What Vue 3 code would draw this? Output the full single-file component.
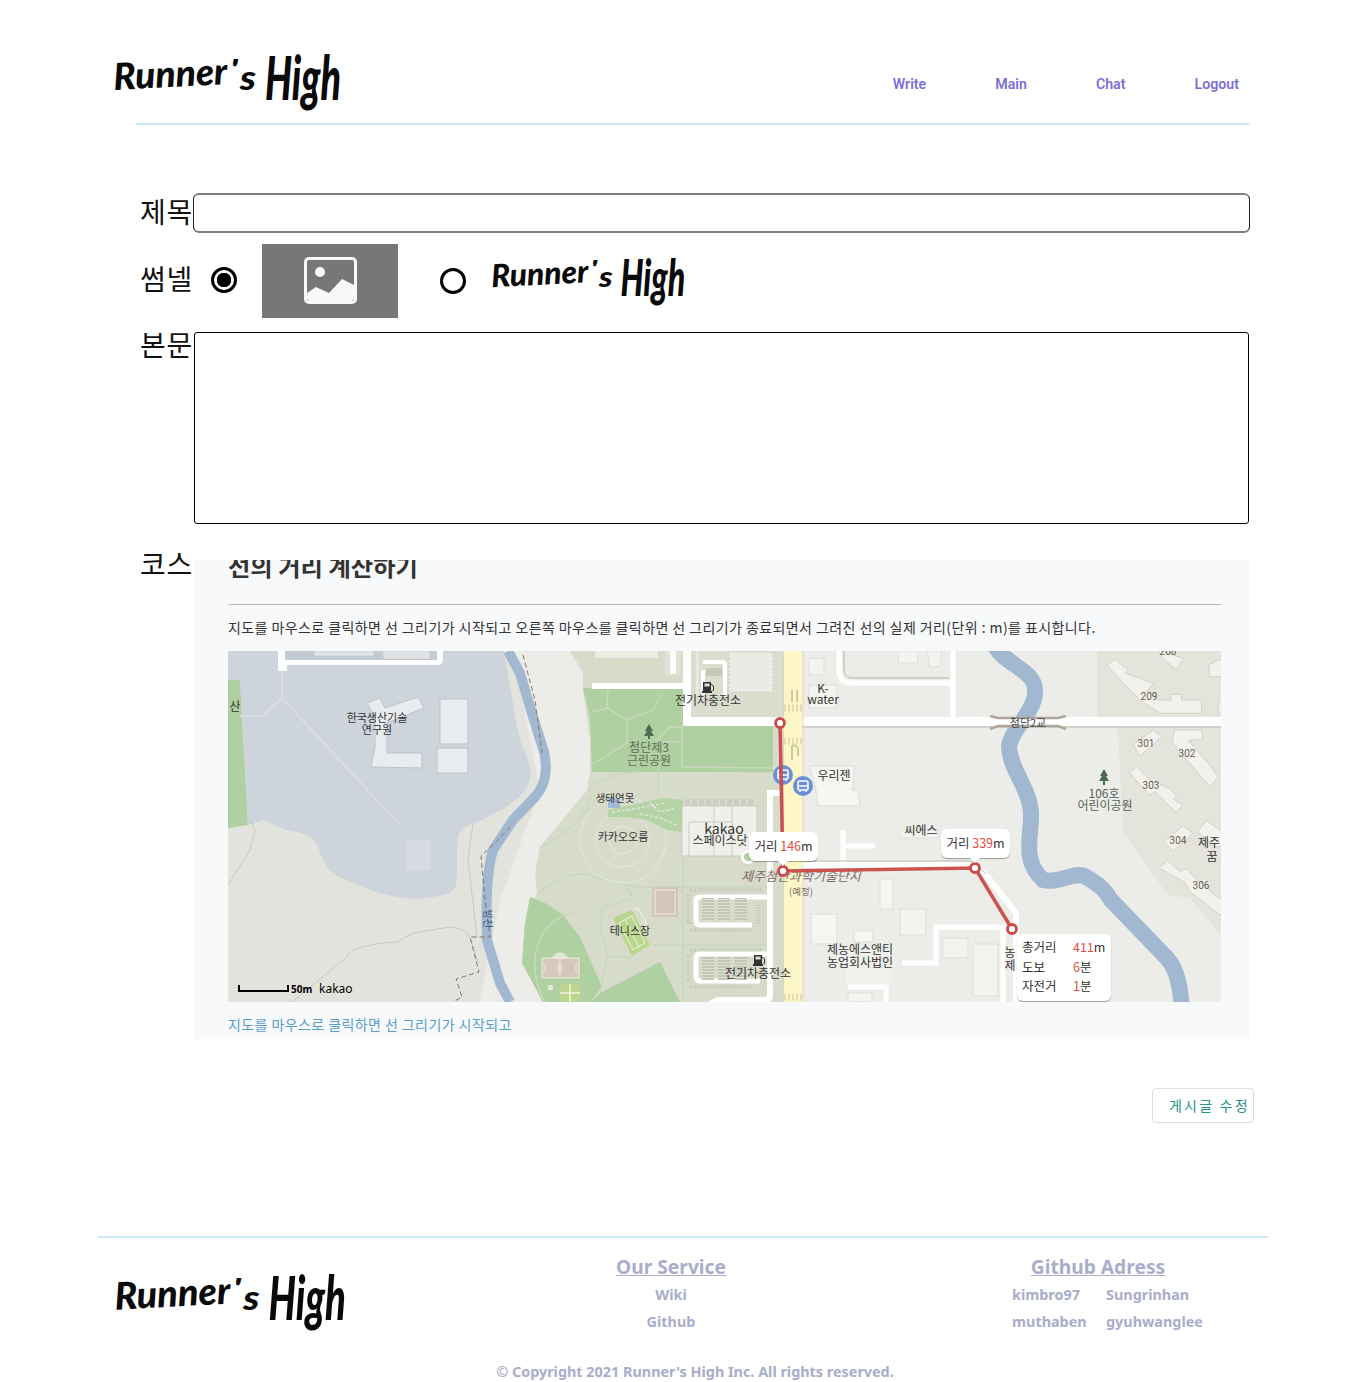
<script setup>
const navItems = ['Write', 'Main', 'Chat', 'Logout']

// map labels: page-relative coords, the svg viewBox is offset to match
const mapLabels = [
  { t: '전기차충전소', x: 708, y: 705 },
  { t: 'K-', x: 823, y: 693 },
  { t: 'water', x: 823, y: 704 },
  { t: '첨단제3', x: 649, y: 752, c: '#5c6b5a' },
  { t: '근린공원', x: 649, y: 765, c: '#5c6b5a' },
  { t: '한국생산기술', x: 377, y: 722, s: 11 },
  { t: '연구원', x: 377, y: 734, s: 11 },
  { t: '산', x: 235, y: 711 },
  { t: '우리젠', x: 834, y: 780 },
  { t: '106호', x: 1104, y: 798, c: '#55605a' },
  { t: '어린이공원', x: 1105, y: 810, c: '#55605a' },
  { t: '생태연못', x: 615, y: 802, s: 10.5 },
  { t: '카카오오름', x: 623, y: 841, s: 11 },
  { t: 'kakao', x: 724, y: 834, s: 14 },
  { t: '스페이스닷', x: 720, y: 845 },
  { t: '씨에스', x: 921, y: 835 },
  { t: '테니스장', x: 630, y: 935, s: 11 },
  { t: '제농에스앤티', x: 860, y: 954 },
  { t: '농업회사법인', x: 860, y: 967 },
  { t: '전기차충전소', x: 758, y: 978 },
  { t: '제주', x: 1209, y: 847 },
  { t: '꿈', x: 1212, y: 861 },
  { t: '농', x: 1010, y: 957 },
  { t: '제', x: 1010, y: 970 },
]
const aptNumbers = [
  { t: '208', x: 1168, y: 655 },
  { t: '209', x: 1149, y: 700 },
  { t: '301', x: 1146, y: 747 },
  { t: '302', x: 1187, y: 757 },
  { t: '303', x: 1151, y: 789 },
  { t: '304', x: 1178, y: 844 },
  { t: '306', x: 1201, y: 889 },
]
// traced from the reference crop, in 3x crop units (see transform on the group)
const apartments = [
  '50,45 75,28 115,60 105,70 150,85 190,100 170,125 205,150 243,150 243,133 275,133 275,150 335,150 335,190 210,190 150,150 115,115',
  '205,0 280,25 258,60 215,20',
  '357,45 385,30 405,30 405,80 357,80',
  '385,155 405,155 405,190 385,190',
  '130,285 190,240 215,260 150,318',
  '253,240 337,240 337,268 295,272 355,340 385,380 360,410 247,280',
  '118,368 140,350 180,392 205,400 240,418 262,440 250,448 278,465 258,487 195,425 178,435',
  '222,575 280,527 308,550 250,603',
  '322,545 350,512 405,550 405,590 375,590',
  '208,655 232,632 270,665 290,655 310,680 385,745 405,745 405,775 390,795 300,725 285,697',
]
const parkLines = [
  'M608,690 L607,708 M590,713 L607,708 L627,720 L653,710 L662,693',
  'M627,720 V743 L600,760 L590,765',
  'M657,740 L670,727 H683 M682,727 V767 M660,742 H682 M682,767 L773,768',
  'M658,767 V797',
  'M592,785 C610,775 625,772 640,772',
  'M540,892 C560,875 575,872 590,875 C610,882 625,887 650,887 H767',
  'M627,888 L633,898 L603,907 L600,927 L608,957 H630',
  'M652,945 H767',
  'M683,857 V1000',
  'M678,923 H695',
  'M572,913 C550,918 538,935 535,957 C534,975 537,990 545,1002',
  'M600,993 L607,958',
  'M540,848 C570,830 590,815 590,795',
]
const totals = [
  { k: '총거리', v: '411', u: 'm' },
  { k: '도보', v: '6', u: '분' },
  { k: '자전거', v: '1', u: '분' },
]
const githubNames = ['kimbro97', 'Sungrinhan', 'muthaben', 'gyuhwanglee']
const parkCells = [
  [702, 898], [718, 898], [735, 898],
  [702, 957], [718, 957], [735, 957],
]
</script>

<template>
  <div class="page">
    <header class="top">
      <svg class="logo logo-top" viewBox="0 0 230 64">
        <g class="logo-ink">
          <text x="2" y="40" font-size="37" textLength="114" lengthAdjust="spacingAndGlyphs" transform="rotate(-3 2 40)">Runner</text>
          <text x="118" y="28" font-size="26" textLength="8" lengthAdjust="spacingAndGlyphs">'</text>
          <text x="128" y="40" font-size="34" textLength="16" lengthAdjust="spacingAndGlyphs">s</text>
          <text x="153" y="50" font-size="60" textLength="76" lengthAdjust="spacingAndGlyphs">High</text>
        </g>
      </svg>
      <nav class="nav">
        <a v-for="item in navItems" :key="item" href="#">{{ item }}</a>
      </nav>
    </header>

    <form class="form" @submit.prevent>
      <div class="row row-title">
        <label class="lbl">제목</label>
        <input class="title-input" type="text" />
      </div>

      <div class="row row-thumb">
        <label class="lbl">썸넬</label>
        <input class="radio radio-a" type="radio" name="thumb" checked />
        <div class="thumb">
          <svg width="53" height="47" viewBox="0 0 53 47">
            <rect width="53" height="47" rx="5" fill="#f8f9fb" />
            <rect x="3" y="3" width="47" height="41" rx="2" fill="#777" />
            <circle cx="16" cy="15" r="5" fill="#f8f9fb" />
            <path d="M3 36 L12 30 L25 36 L38 22 L50 28 V41 Q50 44 47 44 H6 Q3 44 3 41 Z" fill="#f8f9fb" />
          </svg>
        </div>
        <input class="radio radio-b" type="radio" name="thumb" />
        <svg class="logo logo-thumb" viewBox="0 0 230 64">
          <g class="logo-ink">
            <text x="2" y="40" font-size="37" textLength="114" lengthAdjust="spacingAndGlyphs" transform="rotate(-3 2 40)">Runner</text>
            <text x="118" y="28" font-size="26" textLength="8" lengthAdjust="spacingAndGlyphs">'</text>
            <text x="128" y="40" font-size="34" textLength="16" lengthAdjust="spacingAndGlyphs">s</text>
            <text x="153" y="50" font-size="60" textLength="76" lengthAdjust="spacingAndGlyphs">High</text>
          </g>
        </svg>
      </div>

      <div class="row row-body">
        <label class="lbl">본문</label>
        <textarea class="body-input"></textarea>
      </div>

      <div class="row row-course">
        <label class="lbl lbl-course">코스</label>
        <section class="panel">
          <h2>선의 거리 계산하기</h2>
          <hr />
          <p class="desc">지도를 마우스로 클릭하면 선 그리기가 시작되고 오른쪽 마우스를 클릭하면 선 그리기가 종료되면서 그려진 선의 실제 거리(단위 : m)를 표시합니다.</p>

          <div class="map">
            <svg class="map-svg" viewBox="228 651 993 351" width="993" height="351">
              <defs>
                <pattern id="cell-stripes" width="4" height="3" patternUnits="userSpaceOnUse">
                  <rect width="4" height="3" fill="#c2c7b3" />
                  <rect y="2" width="4" height="1" fill="#dde0d2" />
                </pattern>
              </defs>
              <rect x="228" y="651" width="993" height="351" fill="#ecede8" />

              <!-- west land, lake -->
              <path d="M228,651 H512 L540,790 L500,900 L480,1002 H228 Z" fill="#e2e3dc" />
              <path d="M228,680 H240 L248,825 L228,828 Z" fill="#afd0a0" />
              <path d="M228,651 H503 C512,690 516,730 522,745 C530,765 535,775 525,790 C515,805 495,812 483,820 C465,825 457,830 457,845 V878 C457,888 452,893 445,894 C430,899 415,899 403,898 C385,895 375,892 363,887 C345,880 335,876 328,868 C320,858 320,848 316,843 C310,835 300,832 287,830 C275,826 268,822 263,820 L248,825 L240,680 H228 Z" fill="#cdd4dc" />
              <path d="M282,668 V698 L400,825 M282,698 L262,716 H240" fill="none" stroke="#d8dde3" stroke-width="2" />
              <path d="M278,651 V671 H287 V665 H437 Q443,665 443,659 V651" fill="#fff" />
              <path d="M285,651 V660 H437 V651 Z" fill="#c4cad1" />
              <rect x="314" y="651" width="60" height="5" fill="#e0e3e5" stroke="#bdc2c6" stroke-width=".5" />
              <rect x="383" y="651" width="47" height="8" fill="#e0e3e5" stroke="#bdc2c6" stroke-width=".5" />
              <path d="M367,703 L380,698 L385,708 L418,697 L424,708 L387,723 V753 H422 V768 L371,767 L375,747 V717 Z" fill="#e9ecee" stroke="#bdc2c6" />
              <rect x="440" y="699" width="28" height="45" fill="#e9ecee" stroke="#bdc2c6" />
              <rect x="437" y="748" width="31" height="25" fill="#e9ecee" stroke="#bdc2c6" />
              <rect x="406" y="840" width="24" height="30" fill="#d6dbe4" />
              <path d="M228,885 L250,850 L255,830 L250,820 M292,1002 L347,957 Q350,945 397,942 L413,933 L450,927 Q466,928 470,937 L478,963 M473,823 L468,860 L477,937" fill="none" stroke="#c8c8c0" />

              <!-- rivers -->
              <path d="M508,651 L520,673 L530,707 L544,752 C548,770 546,785 535,797 L513,820 L493,850 C486,875 486,905 487,940 L500,983 L510,1002" fill="none" stroke="#a2b8d0" stroke-width="10" />
              <path d="M523,655 L535,700 L542,753 M510,827 L493,845 L481,856 L485,900 L490,937 H470 L479,972 L456,979 L462,997 L453,1002" fill="none" stroke="#8a7570" stroke-dasharray="5 3" />
              <path d="M994,645 C1005,665 1035,670 1035,690 C1037,710 1010,730 1009,747 C1010,770 1031,790 1031,815 C1031,840 1022,860 1043,880 C1060,884 1075,870 1086,877 C1100,885 1105,890 1111,900 L1164,955 C1175,965 1180,980 1182,1010" fill="none" stroke="#a2b8d0" stroke-width="16" />

              <!-- east housing -->
              <path d="M1097,651 V718 H1221 V651 Z M1118,727 L1123,832 L1168,895 L1190,898 L1221,935 V727 Z" fill="#e4e3dc" />
              <g transform="translate(1090 650) scale(.3333)">
                <polygon v-for="a in apartments" :key="a" :points="a" fill="#f2f1ec" stroke="#d4d2c7" stroke-width="3" />
              </g>

              <!-- park -->
              <path d="M570,651 L583,673 V690 L590,740 V773 L587,790 L540,847 L535,873 L537,893 L525,923 L522,963 L543,1002 H783 V651 Z" fill="#d7dbc9" />
              <path d="M583,688 L590,717 L592,772 H773 V726 H683 V689 Z" fill="#afd0a0" />
              <path d="M530,897 L545,903 L563,915 L580,937 L602,987 L590,1002 H543 L522,963 L525,923 Z" fill="#afd0a0" />
              <path d="M660,962 L680,1002 H590 L602,992 Z" fill="#afd0a0" />
              <path v-for="l in parkLines" :key="l" :d="l" fill="none" stroke="#c9d8bd" stroke-width="1.5" />
              <g fill="none" stroke="#e8eadf">
                <circle cx="623" cy="840" r="14" />
                <circle cx="623" cy="840" r="27" />
                <circle cx="623" cy="840" r="43" />
              </g>
              <path d="M608,810 L630,805 L663,798 L683,800 V832 L667,830 L647,820 L627,817 L608,817 Z" fill="#b5d4a6" />
              <path d="M612,812 L640,808 L665,803 M640,814 L660,818 L678,826 M650,803 L660,812 L676,808" fill="none" stroke="#e3e6d9" stroke-width="1.5" stroke-dasharray="3 2" />
              <rect x="608" y="798" width="12" height="10" fill="#a3b8d4" />

              <rect x="652" y="887" width="26" height="30" fill="#d4c5b8" />
              <rect x="655" y="890" width="20" height="24" fill="none" stroke="#f2ece6" />
              <path d="M613,918 L632,910 L650,945 L632,956 Z" fill="#b9d68c" />
              <path d="M619,923 L632,916 L645,943 L633,950 Z M625,919 L639,947" fill="none" stroke="#eef3dc" />
              <path d="M632,910 L638,908 L650,930" fill="none" stroke="#f4f4ee" />
              <path d="M552,958 Q560,948 568,958" fill="#dfe4d6" stroke="#eeeee6" />
              <rect x="542" y="958" width="37" height="20" fill="#d6c8bb" stroke="#eeeee6" />
              <path d="M560,958 V978 M542,963 Q549,968 542,973 M579,963 Q572,968 579,973" fill="none" stroke="#f2ece6" />
              <circle cx="560" cy="968" r="2.5" fill="none" stroke="#f2ece6" />
              <rect x="548" y="985" width="5" height="5" fill="#e6e8de" />
              <rect x="560" y="984" width="20" height="18" fill="#bcd68f" />
              <path d="M570,984 V1002 M560,993 H580" stroke="#eef3dc" stroke-width="1.5" />

              <!-- roads, north block -->
              <rect x="595" y="651" width="63" height="7" fill="#ecede6" />
              <rect x="665" y="651" width="16" height="24" fill="#e0e2d6" />
              <rect x="670" y="651" width="6" height="23" fill="#fff" />
              <rect x="592" y="683" width="93" height="6" fill="#fff" />
              <rect x="683" y="651" width="8" height="75" fill="#fff" />
              <rect x="683" y="717" width="100" height="9" fill="#fff" />
              <path d="M691,651 H783 V717 H700 Q691,717 691,708 Z" fill="#dbdecf" />
              <path d="M703,662 H722 Q725,662 725,665 V697 M703,670 V695" fill="none" stroke="#fff" stroke-width="4" />
              <rect x="706" y="668" width="16" height="8" fill="#c6cab9" />
              <rect x="696" y="651" width="3" height="45" fill="#e8e9e0" />
              <rect x="729" y="652" width="44" height="40" fill="#eaebe5" stroke="#c9ccbe" stroke-dasharray="2 2" />

              <path d="M780,793 H770 V995 Q770,1000 765,1000 H718 L706,1006" fill="none" stroke="#fff" stroke-width="6" />
              <rect x="803" y="717" width="418" height="9" fill="#fff" />
              <path d="M803,727 H1221" stroke="#b5b5ad" />
              <rect x="784" y="651" width="19" height="351" fill="#fdf6c6" />
              <path d="M803,651 V1002 M783.5,651 V1002" stroke="#d0ccb0" stroke-width=".7" />
              <path d="M784,708 H803 M784,741 H803 M784,997 H803" stroke="#e2dcae" stroke-width="7" stroke-dasharray="2 2" />
              <path d="M792,690 V702 M797,690 V702 M792,760 V746 Q795,744 798,748 V756" fill="none" stroke="#cdc8a6" stroke-width="2" />
              <path d="M990,716 L998,718 H1058 L1066,716 M990,729 L998,726 H1058 L1066,729" fill="none" stroke="#b0a59c" stroke-width="2.5" />

              <!-- east blocks -->
              <rect x="809" y="685" width="28" height="23" fill="#f3f3ef" stroke="#ddd" />
              <rect x="809" y="658" width="15" height="17" fill="#f3f3ef" stroke="#ddd" />
              <rect x="898" y="651" width="20" height="12" fill="#f3f3ef" stroke="#ddd" />
              <path d="M927,651 H942 L940,666 L930,668 Z" fill="#f3f3ef" stroke="#ddd" />
              <path d="M839,651 V670 Q839,683 852,683 H951 M953,651 V717" fill="none" stroke="#fff" stroke-width="5" />
              <path d="M844,651 V668 Q844,678 852,678 H949" fill="none" stroke="#b5b5ad" />
              <path d="M810,766 H855 L852,790 H858 L860,806 H818 L816,790 Z" fill="#f5f5f2" stroke="#ddd" />
              <path d="M843,830 V862 M843,846 H875" fill="none" stroke="#fff" stroke-width="5" />
              <rect x="900" y="830" width="38" height="8" fill="#f3f3ef" stroke="#ddd" />
              <path d="M803,865 H975 L990,880 L1016,913 V1002" fill="none" stroke="#fff" stroke-width="6" />
              <path d="M803,861 H972 L986,874" fill="none" stroke="#bcbcb4" />
              <path d="M902,963 H936 V927 H1003 V1005 H970 V1010" fill="none" stroke="#fff" stroke-width="5" />
              <path d="M848,987 H886 V1002" fill="none" stroke="#fff" stroke-width="5" />
              <rect x="880" y="879" width="13" height="30" fill="#f5f5f2" stroke="#ddd" />
              <rect x="900" y="909" width="26" height="26" fill="#f3f3ef" stroke="#ddd" />
              <rect x="811" y="914" width="26" height="30" fill="#f5f5f2" stroke="#ddd" />
              <rect x="854" y="931" width="19" height="11" fill="#f5f5f2" stroke="#ddd" />
              <rect x="943" y="938" width="25" height="20" fill="#f3f3ef" stroke="#ddd" />
              <rect x="973" y="944" width="25" height="52" fill="#f3f3ef" stroke="#ddd" />
              <rect x="846" y="950" width="47" height="34" fill="#f0f0ec" />
              <rect x="848" y="993" width="24" height="9" fill="#f5f5f2" stroke="#ddd" />

              <!-- kakao block and parking -->
              <rect x="682" y="806" width="75" height="50" fill="#eff0ea" stroke="#c9ccc0" />
              <path d="M685,802 H755" stroke="#c9ccc0" stroke-width="6" stroke-dasharray="5 2" />
              <path d="M714,806 V856 M732,806 V856 M689,822 H732 M689,822 V856" fill="none" stroke="#c9ccc0" />
              <circle cx="748" cy="857" r="7" fill="#fff" />
              <circle cx="748" cy="857" r="4" fill="#afd0a0" />
              <path d="M690,890 H762 M690,930 H752 M690,950 H762 M690,987 H752 M688,895 V925 M688,955 V982 M758,905 V925" fill="none" stroke="#c3c8b6" stroke-width="4" stroke-dasharray="1 1.5" />
              <path d="M770,897 H700 Q696,897 696,901 V921 Q696,925 700,925 H752 M770,954 H700 Q696,954 696,958 V976 Q696,981 700,981 H760" fill="none" stroke="#fff" stroke-width="5" />
              <rect v-for="c in parkCells" :key="c.join()" :x="c[0]" :y="c[1]" width="12" height="23" fill="url(#cell-stripes)" />

              <!-- trees, pumps -->
              <g fill="#4f6b50">
                <path d="M649,724 L653,731 H651 L654,736 H650 V739 H648 V736 H644 L647,731 H645 Z" />
                <path d="M1104,769 L1108,776 H1106 L1109,781 H1105 V785 H1103 V781 H1099 L1102,776 H1100 Z" />
              </g>
              <g v-for="p in [[703, 682], [754, 955]]" :key="p[0]" :transform="`translate(${p[0]} ${p[1]})`">
                <path d="M0,0 H8 V9 H9 V11 H-1 V9 H0 Z" fill="#333" />
                <rect x="1.5" y="1.5" width="5" height="3" fill="#ddd" />
                <path d="M8,2 L10.5,4 V8 Q10.5,9 9.5,8.5" fill="none" stroke="#333" />
              </g>

              <!-- labels -->
              <g class="map-label">
                <text v-for="l in mapLabels" :key="l.t + l.x" :x="l.x" :y="l.y" :font-size="l.s || 12" :fill="l.c || '#333'">{{ l.t }}</text>
                <text class="bridge" x="1028" y="727">첨단2교</text>
                <text class="river" transform="translate(484 919) rotate(90)">방천</text>
                <text class="complex" x="801" y="881">제주첨단과학기술단지</text>
                <text class="complex plan" x="801" y="895">(예정)</text>
              </g>
              <g class="apt-label">
                <text v-for="a in aptNumbers" :key="a.t" :x="a.x" :y="a.y">{{ a.t }}</text>
              </g>

              <!-- bus stops -->
              <g v-for="b in [[783, 775], [803, 786]]" :key="b[0]" :transform="`translate(${b[0]} ${b[1]})`">
                <circle r="10" fill="#6a8fd8" />
                <rect x="-5" y="-5" width="10" height="9" rx="1.5" fill="none" stroke="#fff" stroke-width="1.6" />
                <path d="M-5,0 H5 M-3,5 V6 M3,5 V6" stroke="#fff" stroke-width="1.6" />
              </g>

              <!-- drawn route -->
              <polyline points="780,723 783,871 975,868 1012,929" fill="none" stroke="#cb4a48" stroke-width="3.5" opacity=".95" />
              <g fill="#fff" stroke="#cb4a48" stroke-width="2.8">
                <circle cx="780" cy="723" r="4.5" />
                <circle cx="783" cy="871" r="4.5" />
                <circle cx="975" cy="868" r="4.5" />
                <circle cx="1012" cy="929" r="4.5" />
              </g>

              <g class="scale">
                <path d="M239,985 V991 H288 V985" fill="none" stroke="#000" stroke-width="2" />
                <text class="scale-m" x="291" y="993">50m</text>
                <text class="scale-k" x="319" y="993">kakao</text>
              </g>
            </svg>

            <div class="dist dist-a">거리 <b>146</b>m</div>
            <div class="dist dist-b">거리 <b>339</b>m</div>
            <div class="total">
              <div v-for="r in totals" :key="r.k" class="total-row">
                <span class="total-k">{{ r.k }}</span><span><b>{{ r.v }}</b>{{ r.u }}</span>
              </div>
            </div>
          </div>

          <p class="hint">지도를 마우스로 클릭하면 선 그리기가 시작되고</p>
        </section>
      </div>

      <div class="actions">
        <button class="edit-btn" type="button">게시글 수정</button>
      </div>
    </form>

    <footer class="foot">
      <div class="foot-grid">
        <svg class="logo logo-foot" viewBox="0 0 230 64">
          <g class="logo-ink">
            <text x="2" y="40" font-size="37" textLength="114" lengthAdjust="spacingAndGlyphs" transform="rotate(-3 2 40)">Runner</text>
            <text x="118" y="28" font-size="26" textLength="8" lengthAdjust="spacingAndGlyphs">'</text>
            <text x="128" y="40" font-size="34" textLength="16" lengthAdjust="spacingAndGlyphs">s</text>
            <text x="153" y="50" font-size="60" textLength="76" lengthAdjust="spacingAndGlyphs">High</text>
          </g>
        </svg>
        <div class="foot-col">
          <h3>Our Service</h3>
          <a href="#">Wiki</a>
          <a href="#">Github</a>
        </div>
        <div class="foot-col foot-git">
          <h3>Github Adress</h3>
          <div class="git-names">
            <a v-for="n in githubNames" :key="n" href="#">{{ n }}</a>
          </div>
        </div>
      </div>
      <p class="copy">© Copyright 2021 Runner's High Inc. All rights reserved.</p>
    </footer>
  </div>
</template>

<style scoped>
.page {
  width: 1366px;
  height: 1382px;
  overflow: hidden;
  background: #fff;
  font-family: "Noto Sans CJK KR", "Noto Sans", sans-serif;
}

.top {
  height: 123px;
  margin: 0 117px 0 136px;
  border-bottom: 2px solid #cfe8f8;
  display: flex;
  justify-content: space-between;
  align-items: flex-start;
}
.logo {
  display: block;
  overflow: visible;
  flex: none;
}
.logo-ink text {
  font-family: Lato, "Liberation Sans", sans-serif;
  font-weight: 900;
  font-style: italic;
  fill: #0a0a0a;
}
.logo-top {
  width: 230px;
  height: 64px;
  margin: 50px 0 0 -24px;
}
.nav {
  display: flex;
  gap: 69px;
  margin: 75px 10px 0 0;
}
.nav a {
  font: 600 14.2px/18px Roboto, sans-serif;
  color: #7e6fd6;
  text-decoration: none;
}

.form {
  padding: 68px 0 0 140px;
}
.row {
  display: flex;
  align-items: flex-start;
}
.lbl {
  width: 53px;
  flex: none;
  font-size: 28px;
  line-height: 24px;
  letter-spacing: .7px;
  color: #111;
  white-space: nowrap;
}
.row-title {
  align-items: center;
}
.row-title .lbl {
  margin-top: -4px;
}
.title-input {
  width: 1057px;
  height: 40px;
  box-sizing: border-box;
  border-style: solid;
  border-width: 2px 1px;
  border-color: #7f7f7f #222;
  border-radius: 6px;
  background: #fff;
}
.row-thumb {
  margin-top: 11px;
  height: 74px;
  align-items: center;
}
.row-thumb .lbl {
  margin-top: -6px;
}
.radio {
  appearance: none;
  width: 26px;
  height: 26px;
  box-sizing: border-box;
  margin: 0;
  border: 3px solid #000;
  border-radius: 50%;
  background: #fff;
  flex: none;
}
.radio:checked {
  background: radial-gradient(circle, #000 0 7px, #fff 7.5px);
}
.radio-a {
  margin: -2px 0 0 18px;
}
.thumb {
  width: 136px;
  height: 74px;
  margin-left: 25px;
  background: #777;
  display: flex;
  justify-content: center;
  padding-top: 13px;
  box-sizing: border-box;
  flex: none;
}
.radio-b {
  margin: 0 0 0 42px;
}
.logo-thumb {
  width: 196px;
  height: 55px;
  margin: -2px 0 0 24px;
}
.row-body {
  margin-top: 14px;
}
.body-input {
  width: 1055px;
  height: 192px;
  box-sizing: border-box;
  margin: 0 0 0 1px;
  border: 1px solid #000;
  border-radius: 3px;
  background: #fff;
  resize: none;
  display: block;
}
.row-course {
  margin-top: 36px;
}
.lbl-course {
  margin-top: -9px;
}
.panel {
  width: 1055px;
  height: 479px;
  margin-left: 1px;
  padding: 0 28px 0 34px;
  box-sizing: border-box;
  overflow: hidden;
  background: #f8f9fb;
}
.panel h2 {
  margin: -11px 0 0;
  font-size: 24.3px;
  line-height: 34px;
  font-weight: 700;
  color: #333;
  white-space: nowrap;
}
.panel hr {
  margin: 21px 0 0;
  border: 0;
  border-top: 1px solid #bbb;
}
.desc {
  margin: 12px 0 0;
  font-size: 14px;
  line-height: 20px;
  letter-spacing: .42px;
  color: #333;
  white-space: nowrap;
}
.map {
  position: relative;
  width: 993px;
  height: 351px;
  margin-top: 14px;
  overflow: hidden;
}
.map-svg {
  display: block;
}
.map-label text {
  font-family: "Noto Sans CJK KR", sans-serif;
  text-anchor: middle;
}
.map-label .bridge {
  font-size: 11px;
  fill: #3d4a57;
}
.map-label .river {
  font-size: 10px;
  fill: #3b5a80;
}
.map-label .complex {
  font-size: 13px;
  font-style: italic;
  fill: #7d6b6b;
}
.map-label .plan {
  font-size: 9.5px;
  font-style: normal;
}
.apt-label text {
  font: 10px "Roboto", sans-serif;
  fill: #665f52;
  text-anchor: middle;
}
.scale-m {
  font: 700 10px "Noto Sans", sans-serif;
}
.scale-k {
  font: 12px "Noto Sans", sans-serif;
}
.dist,
.total {
  position: absolute;
  box-sizing: border-box;
  background: #fff;
  border-radius: 6px;
  box-shadow: 0 1px 1px rgba(0, 0, 0, .35);
  font-size: 12.5px;
  color: #333;
}
.dist {
  width: 69px;
  height: 29px;
  line-height: 28px;
  text-align: center;
  white-space: nowrap;
}
.dist::after {
  content: "";
  position: absolute;
  left: 29px;
  bottom: -5px;
  border: 5px solid transparent;
  border-bottom: 0;
  border-top-color: #fff;
}
.dist b,
.total b {
  font-weight: 400;
  color: #e0503f;
}
.dist-a {
  left: 521px;
  top: 181px;
}
.dist-b {
  left: 713px;
  top: 178px;
}
.total {
  left: 789px;
  top: 283px;
  width: 94px;
  height: 67px;
  padding: 3px 5px;
}
.total-row {
  display: flex;
  line-height: 19.5px;
  white-space: nowrap;
}
.total-k {
  width: 51px;
}
.hint {
  margin: 12px 0 0;
  font-size: 14px;
  line-height: 20px;
  letter-spacing: .42px;
  color: #5a9ec9;
}

.actions {
  display: flex;
  justify-content: flex-end;
  width: 1114px;
  margin-top: 49px;
}
.edit-btn {
  width: 102px;
  height: 35px;
  box-sizing: border-box;
  padding: 0 0 0 16px;
  border: 1px solid #ddd;
  border-radius: 4px;
  background: #fff;
  color: #1f9488;
  font: 14px/33px "Noto Sans CJK KR", sans-serif;
  letter-spacing: 2.2px;
  text-align: left;
  white-space: nowrap;
}

.foot {
  width: 1170px;
  margin: 113px 0 0 98px;
  border-top: 2px solid #cfe8f8;
}
.foot-grid {
  display: grid;
  grid-template-columns: 400px 346px 104px 300px;
  height: 125px;
  font-family: "Noto Sans", sans-serif;
}
.logo-foot {
  width: 234px;
  height: 65px;
  margin: 31px 0 0 15px;
}
.foot-col {
  grid-column: 2;
  display: flex;
  flex-direction: column;
  align-items: center;
  padding-top: 15px;
}
.foot-git {
  grid-column: 4;
}
.foot-col h3 {
  margin: 0 0 1px;
  font-size: 19.2px;
  line-height: 27px;
  font-weight: 700;
  color: #a9adcb;
  text-decoration: underline;
}
.foot-col a {
  font-size: 14.4px;
  font-weight: 700;
  line-height: 27px;
  color: #a9adcb;
  text-decoration: none;
}
.git-names {
  display: grid;
  grid-template-columns: 94px 110px;
  align-self: flex-start;
  margin-left: 64px;
}
.copy {
  margin: 0;
  padding-left: 24px;
  text-align: center;
  font: 700 14.4px/18px "Noto Sans", sans-serif;
  color: #a9adcb;
}
</style>
